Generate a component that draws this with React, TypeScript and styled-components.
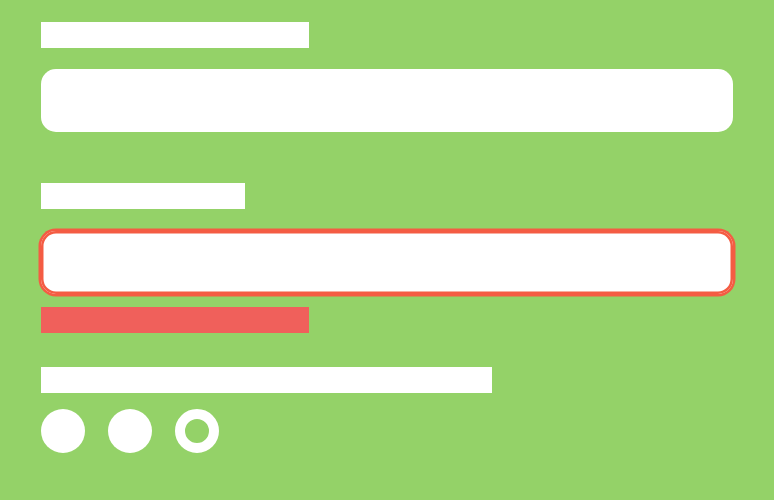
import React from "react";
import styled, { createGlobalStyle } from "styled-components";

const Global = createGlobalStyle`
  html, body { margin: 0; padding: 0; background: #94d268; }
  body { font-family: "Liberation Sans", Arial, sans-serif; }
`;

const Page = styled.div`
  width: 774px;
  height: 500px;
  box-sizing: border-box;
  background: #94d268;
  padding: 22px 41px 0 41px;
  display: flex;
  flex-direction: column;
`;

const Label = styled.div<{ $w: number; $mt?: number }>`
  width: ${(p) => p.$w}px;
  height: 26px;
  background: #ffffff;
  margin-top: ${(p) => p.$mt ?? 0}px;
  flex-shrink: 0;
`;

const Field = styled.div<{ $error?: boolean; $mt: number }>`
  width: 692px;
  height: 63px;
  background: #ffffff;
  border-radius: 15px;
  margin-top: ${(p) => p.$mt}px;
  flex-shrink: 0;
  box-shadow: ${(p) =>
    p.$error ? "0 0 0 2.5px #f45c43, inset 0 0 0 2.5px #f45c43" : "none"};
`;

const ErrorBar = styled.div`
  width: 268px;
  height: 26px;
  background: #f0605b;
  margin-top: 13.5px;
  flex-shrink: 0;
`;

const Dots = styled.div`
  display: flex;
  gap: 23px;
  margin-top: 16px;
`;

const Dot = styled.div<{ $ring?: boolean }>`
  width: 44px;
  height: 44px;
  border-radius: 50%;
  box-sizing: border-box;
  background: ${(p) => (p.$ring ? "transparent" : "#ffffff")};
  border: ${(p) => (p.$ring ? "10px solid #ffffff" : "none")};
`;

export default function App() {
  return (
    <>
      <Global />
      <Page>
        <Label $w={268} />
        <Field $mt={21} />
        <Label $w={204} $mt={51} />
        <Field $mt={21.5} $error />
        <ErrorBar />
        <Label $w={451} $mt={34} />
        <Dots>
          <Dot />
          <Dot />
          <Dot $ring />
        </Dots>
      </Page>
    </>
  );
}
